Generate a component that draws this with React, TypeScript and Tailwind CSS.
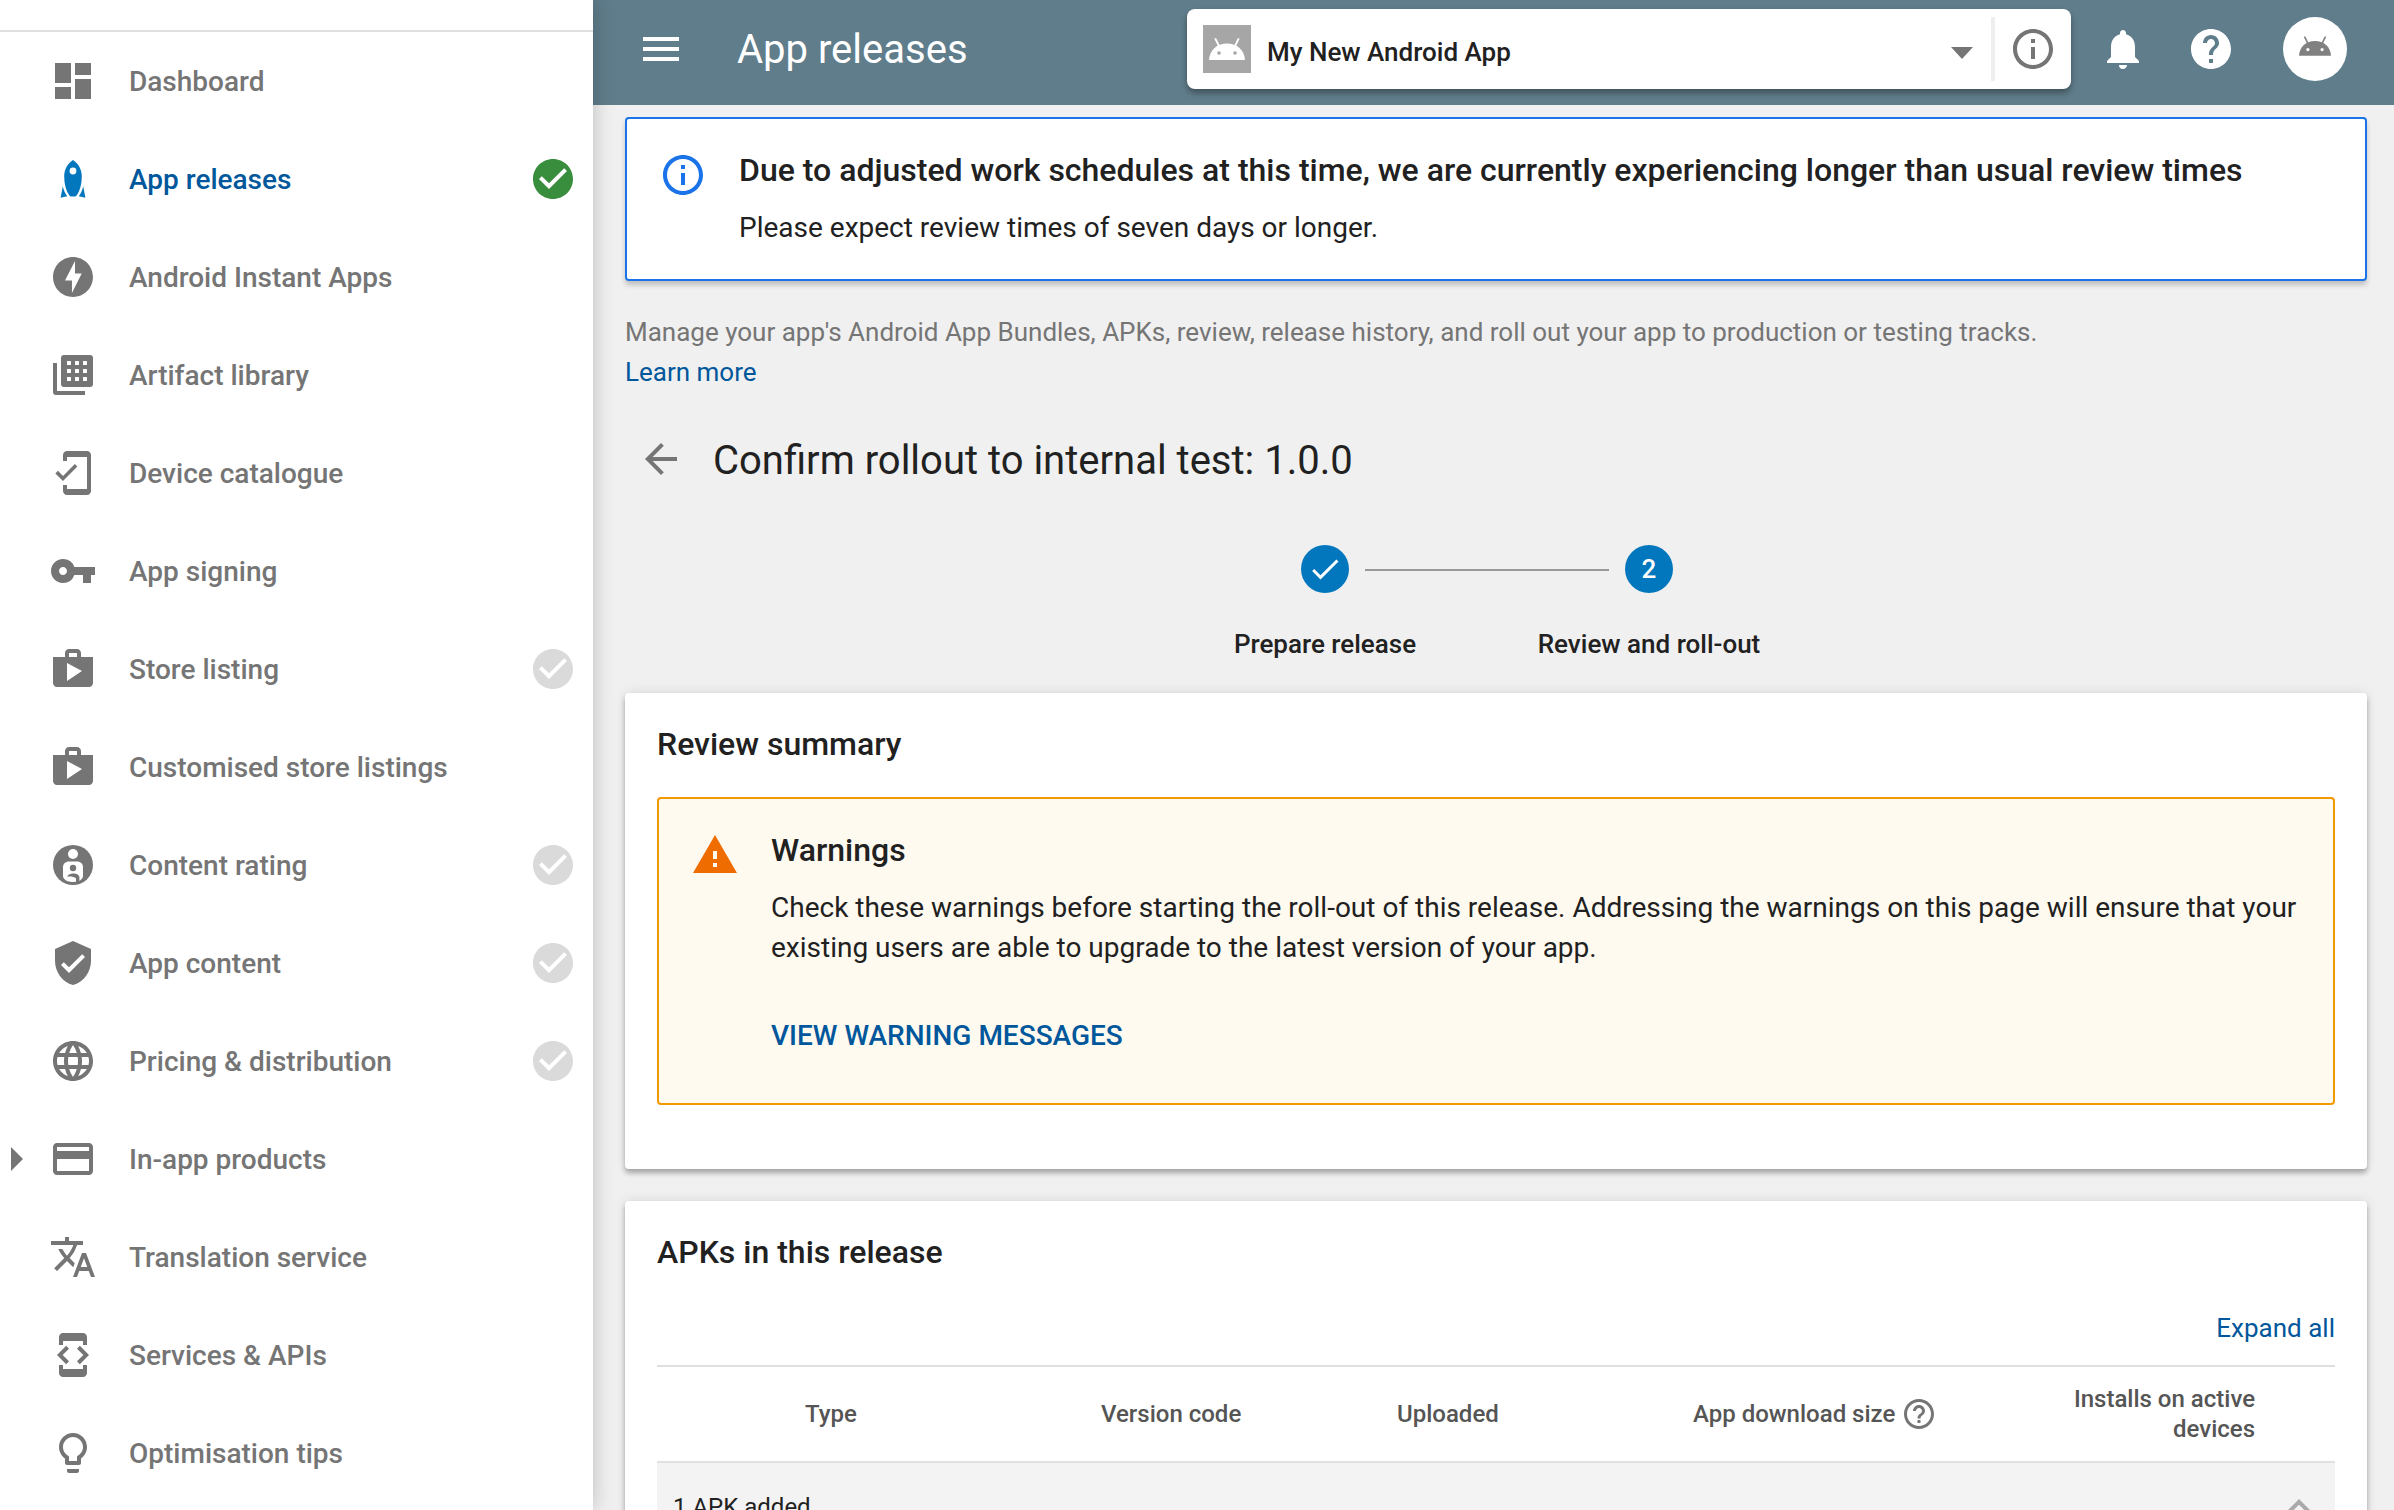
import type { ReactNode } from "react";
import {
  MdArrowBack,
  MdCheck,
  MdCheckCircle,
  MdDashboard,
  MdDeveloperMode,
  MdExpandLess,
  MdHelp,
  MdHelpOutline,
  MdInfoOutline,
  MdLanguage,
  MdLightbulbOutline,
  MdMenu,
  MdMobileFriendly,
  MdNotifications,
  MdOfflineBolt,
  MdPayment,
  MdShop,
  MdTranslate,
  MdVerifiedUser,
  MdVpnKey,
  MdWarning,
} from "react-icons/md";

function RocketIcon() {
  return (
    <svg viewBox="0 0 24 24" className="size-12 text-[#0277bd]" fill="currentColor" aria-hidden="true">
      <path
        fillRule="evenodd"
        d="M12 2.500c-2.600 1.800-4.400 4.600-4.400 8.100 0 3.900.9 7.300 2.600 9.700.3.400.6.500 1 .5h1.600c.4 0 .7-.1 1-.5 1.700-2.400 2.600-5.800 2.600-9.700 0-3.500-1.800-6.300-4.400-8.100zm0 3.800a1.700 1.700 0 1 1 0 3.400 1.700 1.700 0 0 1 0-3.400z"
      />
      <path d="M6.900 15.600 5.800 21.400l3.300-.8c-1.100-1.500-1.800-3.200-2.200-5zM17.100 15.600l1.100 5.800-3.300-.8c1.100-1.500 1.800-3.200 2.200-5z" />
    </svg>
  );
}

function LibraryIcon() {
  return (
    <svg viewBox="0 0 24 24" className="size-12" fill="currentColor" aria-hidden="true">
      <path
        fillRule="evenodd"
        d="M7.500 2h13A1.500 1.500 0 0 1 22 3.500v13a1.500 1.500 0 0 1-1.500 1.500h-13A1.500 1.500 0 0 1 6 16.500v-13A1.500 1.500 0 0 1 7.500 2zM9 5v2h2V5zm4 0v2h2V5zm4 0v2h2V5zM9 9v2h2V9zm4 0v2h2V9zm4 0v2h2V9zM9 13v2h2v-2zm4 0v2h2v-2zm4 0v2h2v-2z"
      />
      <path d="M2 6h2v14h14v2H3.500A1.500 1.500 0 0 1 2 20.500z" />
    </svg>
  );
}

function RatingIcon() {
  return (
    <svg viewBox="0 0 24 24" className="size-12" aria-hidden="true">
      <circle cx="12" cy="12" r="10" fill="currentColor" />
      <circle cx="12" cy="6.500" r="2.500" fill="white" />
      <path d="M7 13c0-1.700 1.300-2.800 3-2.800h4c1.700 0 3 1.100 3 2.800v4.500c0 .9-.8 2-2 2.500-1.800.7-4.200.7-6 0-1.200-.5-2-1.600-2-2.500z" fill="white" />
      <circle cx="12" cy="13.500" r="1.600" fill="currentColor" />
      <path d="M9 17.800c.6-1.100 1.700-1.600 3-1.600 1.800 0 3.200.6 3.200 2v2.300h-1.700V18.600c-1-.8-2.700-1-4.500-.8z" fill="currentColor" />
    </svg>
  );
}

function AndroidHead({ className, eyes }: { className: string; eyes: string }) {
  return (
    <svg viewBox="0 0 36 22" className={className} aria-hidden="true">
      <path d="M6.500 1 10 8M29.500 1 26 8" stroke="currentColor" strokeWidth="1.800" strokeLinecap="round" />
      <path d="M0 22C.5 12 8 5.500 18 5.500S35.500 12 36 22z" fill="currentColor" />
      <circle cx="10" cy="15" r="1.800" fill={eyes} />
      <circle cx="26" cy="15" r="1.800" fill={eyes} />
    </svg>
  );
}

type NavItem = {
  label: string;
  icon: ReactNode;
  status?: "done" | "pending";
  active?: boolean;
  expandable?: boolean;
};

const navItems: NavItem[] = [
  { label: "Dashboard", icon: <MdDashboard className="size-12" /> },
  { label: "App releases", icon: <RocketIcon />, status: "done", active: true },
  { label: "Android Instant Apps", icon: <MdOfflineBolt className="size-12" /> },
  { label: "Artifact library", icon: <LibraryIcon /> },
  { label: "Device catalogue", icon: <MdMobileFriendly className="size-12" /> },
  { label: "App signing", icon: <MdVpnKey className="size-12" /> },
  { label: "Store listing", icon: <MdShop className="size-12" />, status: "pending" },
  { label: "Customised store listings", icon: <MdShop className="size-12" /> },
  { label: "Content rating", icon: <RatingIcon />, status: "pending" },
  { label: "App content", icon: <MdVerifiedUser className="size-12" />, status: "pending" },
  { label: "Pricing & distribution", icon: <MdLanguage className="size-12" />, status: "pending" },
  { label: "In-app products", icon: <MdPayment className="size-12" />, expandable: true },
  { label: "Translation service", icon: <MdTranslate className="size-12" /> },
  { label: "Services & APIs", icon: <MdDeveloperMode className="size-12" /> },
  { label: "Optimisation tips", icon: <MdLightbulbOutline className="size-12" /> },
];

function Sidebar() {
  return (
    <aside className="z-10 w-[593px] shrink-0 overflow-hidden bg-white shadow-[0_0_20px_rgba(0,0,0,0.22)]">
      <div className="h-8 border-b-2 border-[#e0e0e0]" />
      <nav aria-label="Main">
        <ul>
          {navItems.map((item) => (
            <li key={item.label}>
              <a
                href="#"
                className={
                  item.active
                    ? "flex h-[98px] items-center pr-4 text-[28px] font-medium text-[#01579b]"
                    : "flex h-[98px] items-center pr-4 text-[28px] font-medium text-[#757575]"
                }
              >
                <span className="flex w-[49px] shrink-0 pl-[11px]">
                  {item.expandable && (
                    <svg viewBox="0 0 12 24" className="h-6 w-3" fill="currentColor" aria-hidden="true">
                      <path d="M0 0v24l12-12z" />
                    </svg>
                  )}
                </span>
                {item.icon}
                <span className="ml-8 flex-1 pt-0.5">{item.label}</span>
                {item.status === "done" && <MdCheckCircle className="size-12 text-[#388e3c]" />}
                {item.status === "pending" && <MdCheckCircle className="size-12 text-[#dadada]" />}
              </a>
            </li>
          ))}
        </ul>
      </nav>
    </aside>
  );
}

function TopBar() {
  return (
    <header className="flex h-[105px] shrink-0 items-center bg-[#607d8b] pr-[47px] pb-[7px] pl-11 text-white">
      <button type="button" aria-label="Menu">
        <MdMenu className="size-12" />
      </button>
      <h1 className="ml-[52px] flex-1 pt-0.5 text-[40px]">App releases</h1>
      <div className="flex h-20 w-[884px] items-center rounded-lg bg-white pr-[14px] pl-4 text-[#212121] shadow-[0_4px_6px_rgba(0,0,0,0.35)]">
        <span className="flex size-12 shrink-0 items-center justify-center bg-[#a6a6a6]">
          <AndroidHead className="h-[22px] w-9 text-white" eyes="#a6a6a6" />
        </span>
        <div className="relative ml-4 flex h-16 flex-1 items-center">
          <select
            aria-label="Selected app"
            className="h-full w-full appearance-none bg-transparent pt-1.5 text-[26px] font-medium"
          >
            <option>My New Android App</option>
          </select>
          <svg
            viewBox="0 0 22 12"
            className="pointer-events-none absolute top-[30px] right-[18px] h-3 w-[22px] text-[#757575]"
            fill="currentColor"
            aria-hidden="true"
          >
            <path d="M0 0h22L11 12z" />
          </svg>
        </div>
        <span className="mr-[14px] h-16 w-1 bg-[#eeeeee]" />
        <button type="button" aria-label="App information" className="text-[#757575]">
          <MdInfoOutline className="size-12" />
        </button>
      </div>
      <button type="button" aria-label="Notifications" className="ml-7">
        <MdNotifications className="size-12" />
      </button>
      <button type="button" aria-label="Help" className="ml-10">
        <MdHelp className="size-12" />
      </button>
      <button
        type="button"
        aria-label="Account"
        className="ml-12 flex size-16 items-center justify-center rounded-full bg-white pb-1.5"
      >
        <AndroidHead className="h-5 w-8 text-[#808080]" eyes="white" />
      </button>
    </header>
  );
}

function ReviewTimesBanner() {
  return (
    <section className="flex gap-8 rounded border-2 border-[#1a73e8] bg-white px-8 pt-8 pb-[31px] shadow-[0_4px_5px_rgba(0,0,0,0.2)]">
      <MdInfoOutline className="size-12 shrink-0 text-[#1a73e8]" />
      <div>
        <h2 className="text-[32px] leading-[38px] font-medium">
          Due to adjusted work schedules at this time, we are currently experiencing longer than usual review times
        </h2>
        <p className="mt-[19px] text-[28px] leading-10">Please expect review times of seven days or longer.</p>
      </div>
    </section>
  );
}

function Stepper() {
  return (
    <ol className="mt-[58px] flex justify-center pr-[18px] text-[26px] leading-8 font-medium">
      <li className="relative flex w-[324px] flex-col items-center gap-[35px]">
        <span className="flex size-12 items-center justify-center rounded-full bg-[#0277bd] text-white">
          <MdCheck className="size-9" />
        </span>
        <span>Prepare release</span>
        <span className="absolute top-6 left-[202px] h-0.5 w-[244px] bg-[#999999]" />
      </li>
      <li className="flex w-[324px] flex-col items-center gap-[35px]">
        <span className="flex size-12 items-center justify-center rounded-full bg-[#0277bd] text-white">2</span>
        <span>Review and roll-out</span>
      </li>
    </ol>
  );
}

function ReviewSummary() {
  return (
    <section className="mt-[33px] rounded bg-white px-8 pt-8 pb-16 shadow-[0_4px_5px_rgba(0,0,0,0.28),0_0_12px_rgba(0,0,0,0.1)]">
      <h2 className="text-[32px] leading-[38px] font-medium">Review summary</h2>
      <div className="mt-[34px] flex gap-8 rounded border-2 border-[#f29900] bg-[#fefaf0] px-8 pt-8 pb-[47px]">
        <MdWarning className="size-12 shrink-0 text-[#ef6c00]" />
        <div>
          <h3 className="text-[32px] leading-[38px] font-medium">Warnings</h3>
          <p className="mt-[19px] text-[28px] leading-10">
            Check these warnings before starting the roll-out of this release. Addressing the warnings on this page will
            ensure that your existing users are able to upgrade to the latest version of your app.
          </p>
          <button type="button" className="mt-12 block text-[28px] leading-10 font-medium text-[#01579b]">
            VIEW WARNING MESSAGES
          </button>
        </div>
      </div>
    </section>
  );
}

function ReleaseApks() {
  return (
    <section className="mt-8 rounded bg-white px-8 pt-8 pb-16 shadow-[0_4px_5px_rgba(0,0,0,0.28),0_0_12px_rgba(0,0,0,0.1)]">
      <h2 className="text-[32px] leading-[38px] font-medium">APKs in this release</h2>
      <div className="mt-[37px] mb-[17px] flex justify-end">
        <button type="button" className="text-[26px] leading-10 text-[#01579b]">
          Expand all
        </button>
      </div>
      <table className="w-full table-fixed">
        <colgroup>
          <col className="w-[148px]" />
          <col />
          <col />
          <col />
          <col />
          <col className="w-[266px]" />
          <col className="w-20" />
        </colgroup>
        <thead>
          <tr className="h-24 border-y-2 border-[#e0e0e0] text-left text-[24px] leading-[30px] text-[#555555]">
            <td />
            <th className="font-medium">Type</th>
            <th className="font-medium">Version code</th>
            <th className="font-medium">Uploaded</th>
            <th className="font-medium">
              <span className="flex items-center gap-[6px]">
                App download size
                <button type="button" aria-label="About app download size" className="text-[#757575]">
                  <MdHelpOutline className="size-9" />
                </button>
              </span>
            </th>
            <th className="text-right font-medium">Installs on active devices</th>
            <td />
          </tr>
        </thead>
        <tbody>
          <tr className="h-[88px] bg-[#f3f3f3] text-[24px]">
            <td colSpan={6} className="pl-4">
              1 APK added
            </td>
            <td>
              <button type="button" aria-label="Collapse added APKs" className="ml-5 flex text-[#aaaaaa]">
                <MdExpandLess className="size-12" />
              </button>
            </td>
          </tr>
        </tbody>
      </table>
    </section>
  );
}

export default function App() {
  return (
    <div className="flex h-screen overflow-hidden bg-[#f0f0f0] font-[Roboto,sans-serif] text-[#212121]">
      <Sidebar />
      <div className="flex min-w-0 flex-1 flex-col">
        <TopBar />
        <main className="flex-1 overflow-hidden pt-3 pr-[27px] pl-8">
          <ReviewTimesBanner />
          <p className="mt-[31px] text-[26px] leading-10 text-[#757575]">
            Manage your app&apos;s Android App Bundles, APKs, review, release history, and roll out your app to
            production or testing tracks.
            <a href="#" className="block text-[#01579b]">
              Learn more
            </a>
          </p>
          <div className="mt-[43px] flex items-start gap-7 pl-3">
            <button type="button" aria-label="Back" className="text-[#757575]">
              <MdArrowBack className="size-12" />
            </button>
            <h2 className="text-[40px] leading-[52px]">Confirm rollout to internal test: 1.0.0</h2>
          </div>
          <Stepper />
          <ReviewSummary />
          <ReleaseApks />
        </main>
      </div>
    </div>
  );
}
